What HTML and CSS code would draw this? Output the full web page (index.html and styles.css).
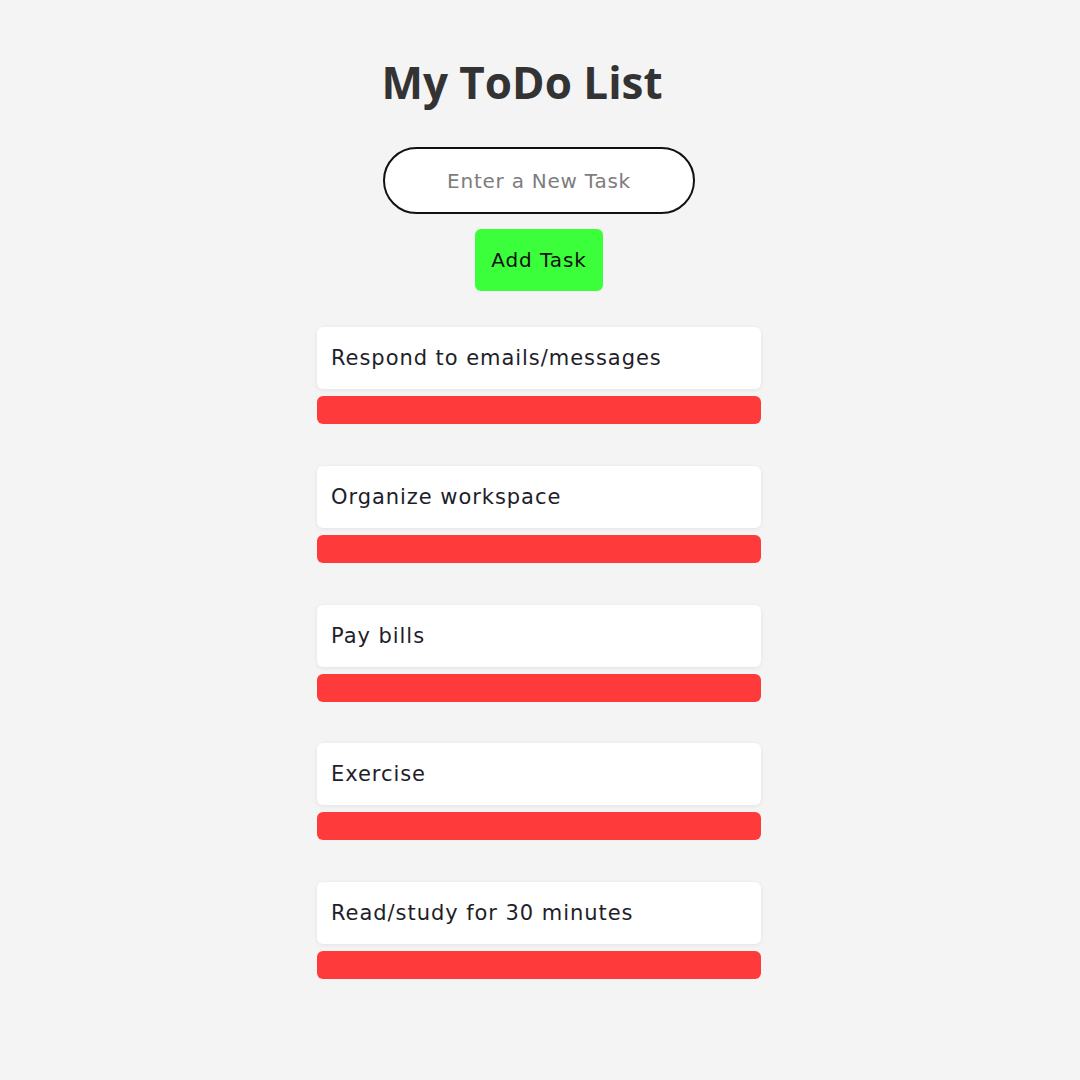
FILE: index.html
```html
<!DOCTYPE html>
<html lang="en">
<head>
<meta charset="utf-8">
<title>My ToDo List</title>
<link rel="stylesheet" href="styles.css">
</head>
<body>
<main class="app">
  <h1 class="title">My ToDo List</h1>
  <div class="form">
    <input class="task-input" type="text" placeholder="Enter a New Task">
    <button class="add-btn" type="button">Add Task</button>
  </div>
  <ul class="list">
    <li class="item"><div class="card">Respond to emails/messages</div><button class="del" type="button" aria-label="Delete"></button></li>
    <li class="item"><div class="card">Organize workspace</div><button class="del" type="button" aria-label="Delete"></button></li>
    <li class="item"><div class="card">Pay bills</div><button class="del" type="button" aria-label="Delete"></button></li>
    <li class="item"><div class="card">Exercise</div><button class="del" type="button" aria-label="Delete"></button></li>
    <li class="item"><div class="card">Read/study for 30 minutes</div><button class="del" type="button" aria-label="Delete"></button></li>
  </ul>
</main>
</body>
</html>
```
FILE: styles.css
```css
* { box-sizing: border-box; }
html, body { margin: 0; padding: 0; }
body {
  background: #f4f4f4;
  font-family: "DejaVu Sans", "Open Sans", sans-serif;
  color: #222;
  padding-right: 2px;
}
.app {
  width: 444px;
  margin: 0 auto;
  padding-top: 52px;
  display: flex;
  flex-direction: column;
  align-items: center;
}
.title {
  margin: 0 34px 0 0;
  font-family: "Open Sans", sans-serif;
  font-size: 44px;
  line-height: 60px;
  font-weight: 700;
  color: #333;
}
.form {
  margin-top: 35px;
  display: flex;
  flex-direction: column;
  align-items: center;
  gap: 15px;
}
.task-input {
  width: 312px;
  height: 67px;
  border: 2.5px solid #111;
  border-radius: 34px;
  background: #fff;
  text-align: center;
  font-family: inherit;
  font-size: 20px;
  letter-spacing: 0.75px;
  color: #222;
  outline: none;
}
.task-input::placeholder { color: #7d7d7d; }
.add-btn {
  width: 128px;
  height: 62px;
  border: none;
  border-radius: 6px;
  background: #3cff3c;
  color: #111;
  font-family: inherit;
  font-size: 20px;
  letter-spacing: 0.9px;
  padding: 0;
}
.list {
  list-style: none;
  margin: 36px 0 0;
  padding: 0;
  width: 444px;
  display: flex;
  flex-direction: column;
  gap: 41.75px;
}
.item {
  display: flex;
  flex-direction: column;
  gap: 7px;
}
.card {
  height: 62px;
  background: #fff;
  border-radius: 6px;
  box-shadow: 0 1px 4px rgba(0,0,0,0.08);
  padding: 0 14px;
  display: flex;
  align-items: center;
  font-size: 21px;
  letter-spacing: 0.95px;
  color: #1e1e2a;
}
.del {
  height: 28px;
  border: none;
  border-radius: 6px;
  background: #ff3a3a;
  padding: 0;
}
```
